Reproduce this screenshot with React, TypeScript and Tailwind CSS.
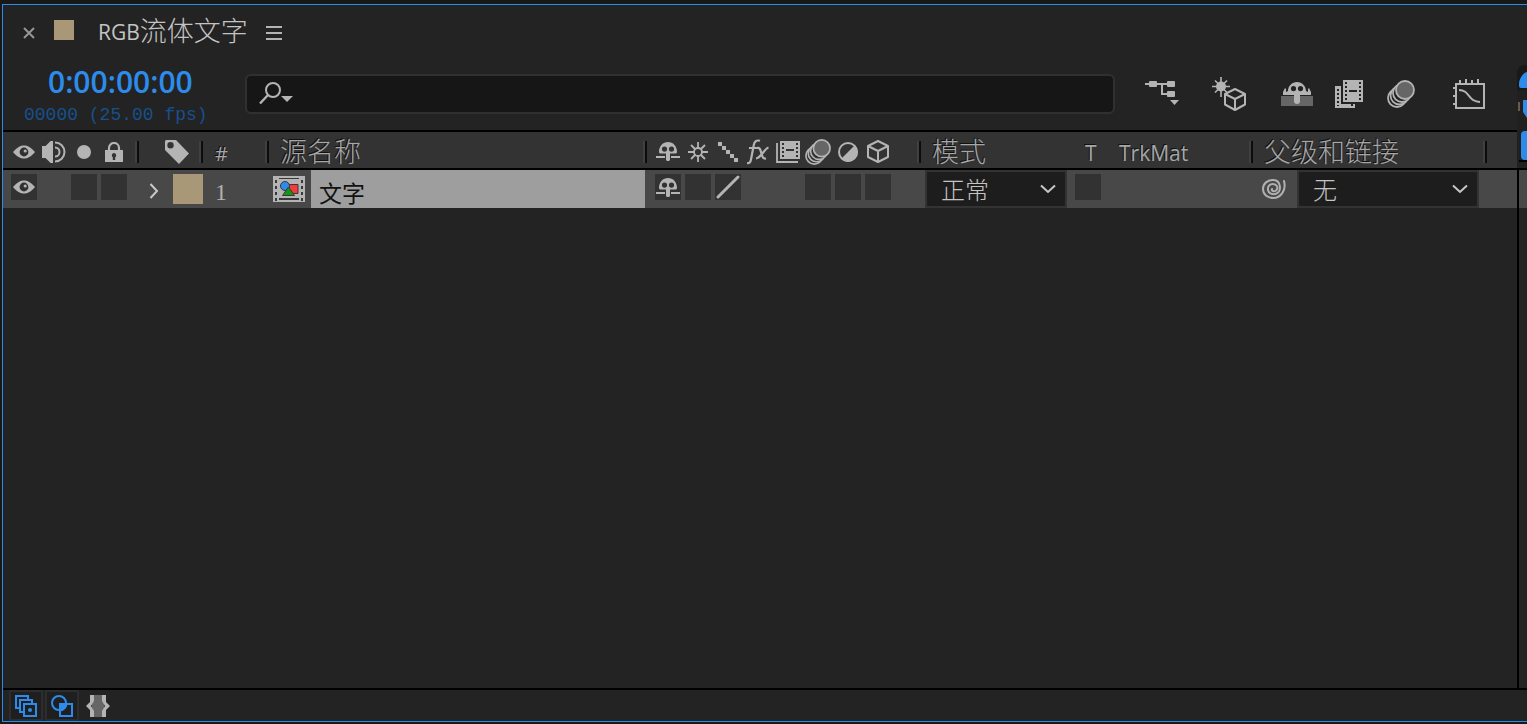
import { useState } from 'react';
import type { ReactNode } from 'react';
import clsx from 'clsx';

const COLUMNS =
  'grid grid-cols-[136px_64px_66px_minmax(200px,1fr)_274px_150px_182px_234px_30px]';

const HEADER_TEXT = 'whitespace-nowrap text-[#a6a6a6] [text-shadow:-1px_-1px_0_#111]';

function EyeIcon() {
  return (
    <svg width="22" height="14" viewBox="0 0 22 14">
      <path d="M0 7C4 2.300 7.500 .4 11 .4S18 2.300 22 7c-4 4.700-7.500 6.600-11 6.600S4 11.700 0 7z" fill="#b4b4b4" />
      <circle cx="11" cy="7" r="4.400" fill="#303030" />
      <circle cx="12.200" cy="6" r="1.600" fill="#b4b4b4" />
    </svg>
  );
}

function SpeakerIcon() {
  return (
    <svg width="24" height="22" viewBox="0 0 24 22" fill="none" stroke="#b4b4b4" strokeWidth="2">
      <path d="M0 6h4v10H0zM4 6l6-6v22l-6-6z" fill="#b4b4b4" />
      <path d="M13 6.500a4.500 4.500 0 0 1 0 9M13 1.500a9.500 9.500 0 0 1 0 19" />
    </svg>
  );
}

function LockIcon() {
  return (
    <svg width="18" height="20" viewBox="0 0 18 20">
      <path d="M4 9V6a5 5 0 0 1 10 0v3" fill="none" stroke="#b4b4b4" strokeWidth="2.200" />
      <path d="M0 8h18v12H0z" fill="#b4b4b4" />
      <path d="M9 11a2.300 2.300 0 0 0-1.200 4.200V18h2.400v-2.800A2.300 2.300 0 0 0 9 11z" fill="#333" />
    </svg>
  );
}

function TagIcon() {
  return (
    <svg width="24" height="24" viewBox="0 0 24 24">
      <path
        fillRule="evenodd"
        d="M1 0h10l13 13.500L14 24 0 10V1zM5.500 2a3.200 3.200 0 1 0 0 6.400 3.200 3.200 0 0 0 0-6.400z"
        fill="#b4b4b4"
      />
    </svg>
  );
}

function ShyIcon() {
  return (
    <svg width="24" height="19" viewBox="0 0 24 19" fill="#b4b4b4">
      <path
        fillRule="evenodd"
        d="M3 10C3 4 7 0 12 0s9 4 9 10c0 1-1 1.500-2 1.500h-5V18l-1 1h-2l-1-1v-6.500H5c-1 0-2-.5-2-1.500zM8.500 4.500a2.600 2.600 0 1 0 0 5.200 2.600 2.600 0 0 0 0-5.200zm7 0a2.600 2.600 0 1 0 0 5.200 2.600 2.600 0 0 0 0-5.200z"
      />
      <path d="M0 14h9v2H0zM15 14h9v2h-9z" />
    </svg>
  );
}

function SunIcon() {
  return (
    <svg width="20" height="20" viewBox="0 0 20 20" fill="none" stroke="#b4b4b4" strokeWidth="1.800">
      <circle cx="10" cy="10" r="4" />
      <path d="M10 0v6M10 14v6M0 10h6M14 10h6M3 3l4 4M13 13l4 4M17 3l-4 4M7 13l-4 4" />
    </svg>
  );
}

function QualityIcon() {
  return (
    <svg width="20" height="20" viewBox="0 0 20 20" fill="#b4b4b4">
      <path d="M0 0h4v4H0zM4 4h4v4H4zM8 8h4v4H8zM12 12h4v4h-4zM16 16h4v4h-4z" />
    </svg>
  );
}

function FxIcon() {
  return (
    <svg width="22" height="26" viewBox="0 0 22 26" fill="none" stroke="#b4b4b4" strokeWidth="2.200">
      <path d="M0 24c2 .6 3.500-.5 4-3.500L6.800 6C7.400 2.500 9.500 .8 13 1.800M2 9h9" />
      <path d="M10 9c3-.6 3.300 1.400 4.300 5s1.600 6 4.700 5.500M21.500 8.500c-4 1-7.500 10.500-12.500 11" />
    </svg>
  );
}

function FrameBlendIcon() {
  return (
    <svg width="24" height="22" viewBox="0 0 24 22">
      <path d="M1 2v19h21" fill="none" stroke="#b4b4b4" strokeWidth="1.800" />
      <path d="M4 0h20v18H4z" fill="#b4b4b4" />
      <path
        d="M6 2h2v2H6zM6 6h2v2H6zM6 10h2v2H6zM6 14h2v2H6zM20 2h2v2h-2zM20 6h2v2h-2zM20 10h2v2h-2zM20 14h2v2h-2zM10 8h8v2h-8z"
        fill="#333"
      />
    </svg>
  );
}

function MotionBlurIcon({ size, bg }: { size: number; bg: string }) {
  return (
    <svg width={size} height={size} viewBox="0 0 28 28" stroke="#b4b4b4" strokeWidth="1.800">
      <circle cx="10" cy="18" r="9" fill={bg} />
      <circle cx="12.500" cy="15.500" r="9" fill={bg} />
      <circle cx="15" cy="13" r="9" fill={bg} />
      <circle cx="18" cy="10" r="9" fill="#666" />
    </svg>
  );
}

function AdjustmentIcon() {
  return (
    <svg width="20" height="20" viewBox="0 0 20 20">
      <circle cx="10" cy="10" r="9" fill="none" stroke="#b4b4b4" strokeWidth="2" />
      <path d="M17 3A9.600 9.600 0 0 1 3 17z" fill="#b4b4b4" />
    </svg>
  );
}

function CubeIcon() {
  return (
    <svg width="22" height="23" viewBox="0 0 22 23" fill="none" stroke="#b4b4b4" strokeWidth="2" strokeLinejoin="round">
      <path d="M11 1l10 5v11l-10 5-10-5V6zM1 6l10 5 10-5M11 11v11" />
    </svg>
  );
}

function FlowchartIcon() {
  return (
    <svg width="35" height="25" viewBox="0 0 35 25" fill="#b4b4b4">
      <rect x="4" y="0" width="8" height="6" rx="1" />
      <rect x="22" y="0" width="8" height="6" rx="1" />
      <rect x="22" y="10" width="8" height="6" rx="1" />
      <path d="M0 2h23v2H0zM16 3h2v11h-2zM16 12h7v2h-7zM25 19h9l-4.500 5z" />
    </svg>
  );
}

function DraftIcon() {
  return (
    <svg width="35" height="34" viewBox="0 0 35 34" fill="none" stroke="#b4b4b4" strokeWidth="2" strokeLinejoin="round">
      <circle cx="9" cy="9.500" r="5" fill="#b4b4b4" stroke="none" />
      <path d="M9 0v20M0 9.500h18M3 3.500l12 12M15 3.500l-12 12" strokeWidth="1.600" />
      <path d="M23 12l10 5v10.500l-10 5.500-10-5.500V17z" fill="#232323" />
      <path d="M13 17l10 5 10-5M23 22v11" />
    </svg>
  );
}

function HideShyIcon() {
  return (
    <svg width="32" height="24" viewBox="0 0 32 24">
      <path d="M0 14h32v10H0z" fill="#666" />
      <path
        fillRule="evenodd"
        d="M7 9c0-5 4-9 9-9s9 4 9 9l2 1V7l1-1 2 4v3H2v-3l2-4 1 1v3zM12.500 4a2.600 2.600 0 1 0 0 5.200 2.600 2.600 0 0 0 0-5.200zm7 0a2.600 2.600 0 1 0 0 5.200 2.600 2.600 0 0 0 0-5.200z"
        fill="#b4b4b4"
      />
      <rect x="13" y="10" width="6" height="12" rx="3" fill="#b4b4b4" />
    </svg>
  );
}

function FilmStackIcon() {
  return (
    <svg width="28" height="28" viewBox="0 0 28 28">
      <path d="M0 6h6v18h14v4H0z" fill="#b4b4b4" />
      <path d="M2 9h2v2H2zM2 13h2v2H2zM2 17h2v2H2zM2 21h2v2H2zM2 25h2v1H2zM16 24h2v2h-2z" fill="#232323" />
      <path d="M7 0h21v23H7z" fill="#232323" />
      <path d="M8 0h20v22H8z" fill="#b4b4b4" />
      <path
        d="M10 2h2v2h-2zM10 6h2v2h-2zM10 10h2v2h-2zM10 14h2v2h-2zM10 18h2v2h-2zM24 2h2v2h-2zM24 6h2v2h-2zM24 10h2v2h-2zM24 14h2v2h-2zM24 18h2v2h-2zM14 10h8v2h-8z"
        fill="#232323"
      />
    </svg>
  );
}

function GraphIcon() {
  return (
    <svg width="32" height="30" viewBox="0 0 32 30" fill="none" stroke="#b4b4b4" strokeWidth="2">
      <path d="M3 5h28v24H3zM7 1v4M13 0v5M19 1v4M25 0v5M0 9h3M0 17h3M0 25h3" />
      <path d="M6 11c11 0 9 12 21 12" />
    </svg>
  );
}

function SearchIcon() {
  return (
    <svg width="34" height="23" viewBox="0 0 34 23">
      <circle cx="14" cy="8" r="7" fill="none" stroke="#b4b4b4" strokeWidth="2" />
      <path d="M9 13l-8 8.500" stroke="#b4b4b4" strokeWidth="2.400" />
      <path d="M22 14h12l-6 6z" fill="#b4b4b4" />
    </svg>
  );
}

function CompositionIcon() {
  return (
    <svg width="32" height="26" viewBox="0 0 32 26">
      <path d="M0 0h32v26H0z" fill="#b4b4b4" />
      <path
        d="M2 4h2v3H2zM2 10h2v3H2zM2 16h2v3H2zM2 22h2v3H2zM28 4h2v3h-2zM28 10h2v3h-2zM28 16h2v3h-2zM28 22h2v3h-2zM6 2h20v1H6zM6 22h20v2H6z"
        fill="#383838"
      />
      <path d="M15 8.500h10v9H15z" fill="#f23c3c" stroke="#383838" />
      <circle cx="12" cy="10" r="4.500" fill="#2d8ceb" stroke="#383838" />
      <path d="M15.500 11l6 8.500H9.500z" fill="#149614" stroke="#383838" />
    </svg>
  );
}

function PickWhipIcon() {
  return (
    <svg width="24" height="20" viewBox="0 0 24 20" fill="none" stroke="#b0b0b0" strokeWidth="2" strokeLinecap="round">
      <path d="M10 10c-1 2 2 3 4 1.500 3-3 .5-6.500-3-6.500-4 0-5.500 3-5 6 .5 3.500 4.500 5 8 3.800C20 12.500 19 1.200 11.500 1 5.500 .8 1 4.500 1 10c0 5.500 4.500 9 10 9 8 0 13.500-8 11-17" />
    </svg>
  );
}

function Chevron() {
  return (
    <svg className="pointer-events-none absolute right-[11px] top-[14px]" width="16" height="10" viewBox="0 0 16 10">
      <path d="M1 1.500l7 6.500 7-6.500" fill="none" stroke="#c8c8c8" strokeWidth="2" />
    </svg>
  );
}

function Slot({ children }: { children?: ReactNode }) {
  return <span className="flex w-[30px] shrink-0 items-center justify-center">{children}</span>;
}

function HeaderCell({ children, className, divider = true }: { children?: ReactNode; className?: string; divider?: boolean }) {
  return (
    <div className={clsx('flex min-w-0 items-center justify-between pt-[2px]', className)}>
      <div className="flex min-w-0 items-center">{children}</div>
      {divider && <span className="h-[22px] w-1 shrink-0 border-r-2 border-[#0c0c0c] bg-[#404040]" />}
    </div>
  );
}

function Toggle({ label, children, empty }: { label?: string; children?: ReactNode; empty?: boolean }) {
  const [on, setOn] = useState(true);
  if (empty) return <span className="w-[26px] shrink-0" />;
  return (
    <button
      aria-label={label}
      onClick={() => setOn(!on)}
      className="flex size-[26px] shrink-0 items-center justify-center bg-[#323232]"
    >
      {on && children}
    </button>
  );
}

function Dropdown({ label, options, className }: { label: string; options: string[]; className: string }) {
  return (
    <div className={clsx('relative', className)}>
      <select
        aria-label={label}
        className="h-[38px] w-full appearance-none border-2 border-[#333] bg-[#1d1d1d] px-[14px] pt-[2px] text-2xl leading-8 text-[#c4c4c4] outline-none"
      >
        {options.map((o) => (
          <option key={o}>{o}</option>
        ))}
      </select>
      <Chevron />
    </div>
  );
}

function Toolbar() {
  return (
    <div className="flex h-[73px] items-start pr-8">
      <div className="flex w-[242px] shrink-0 flex-col pl-[21px] pt-1">
        <button className="self-start pl-6 font-['Open_Sans',sans-serif] text-[30px] font-semibold leading-[42px] text-[#2d8ceb]">
          0:00:00:00
        </button>
        <span className="whitespace-nowrap font-['Liberation_Mono',monospace] text-lg leading-6 text-[#17508c]">
          00000 (25.00 fps)
        </span>
      </div>
      <label className="mt-[17px] flex h-10 min-w-0 flex-1 items-center rounded-md border-2 border-[#303030] bg-[#161616] px-3 pb-[2px]">
        <SearchIcon />
        <input aria-label="搜索" className="ml-2 min-w-0 flex-1 bg-transparent text-xl text-[#c4c4c4] outline-none" />
      </label>
      <div className="flex h-[73px] shrink-0 items-center pl-[30px]">
        <button aria-label="合成微型流程图"><FlowchartIcon /></button>
        <button aria-label="草图 3D" className="ml-8"><DraftIcon /></button>
        <button aria-label="隐藏消隐图层" className="ml-[34px]"><HideShyIcon /></button>
        <button aria-label="帧混合" className="ml-[22px]"><FilmStackIcon /></button>
        <button aria-label="运动模糊" className="ml-6"><MotionBlurIcon size={28} bg="#232323" /></button>
        <button aria-label="图表编辑器" className="ml-[38px]"><GraphIcon /></button>
      </div>
    </div>
  );
}

function ColumnHeader() {
  return (
    <div className={clsx(COLUMNS, 'h-10 border-y-2 border-black bg-[#333]')}>
      <HeaderCell className="pl-[6px]">
        <Slot><EyeIcon /></Slot>
        <Slot><SpeakerIcon /></Slot>
        <Slot><span className="size-[14px] rounded-full bg-[#b4b4b4]" /></Slot>
        <Slot><LockIcon /></Slot>
      </HeaderCell>
      <HeaderCell className="pl-[26px]"><TagIcon /></HeaderCell>
      <HeaderCell className="pl-3">
        <span className={clsx(HEADER_TEXT, 'pt-1 text-xl font-normal')}>#</span>
      </HeaderCell>
      <HeaderCell className="pl-[11px]">
        <span className={clsx(HEADER_TEXT, 'text-[27px] leading-8')}>源名称</span>
      </HeaderCell>
      <HeaderCell className="pl-[6px]">
        <Slot><ShyIcon /></Slot>
        <Slot><SunIcon /></Slot>
        <Slot><QualityIcon /></Slot>
        <Slot><FxIcon /></Slot>
        <Slot><FrameBlendIcon /></Slot>
        <Slot><MotionBlurIcon size={26} bg="#333" /></Slot>
        <Slot><AdjustmentIcon /></Slot>
        <Slot><CubeIcon /></Slot>
      </HeaderCell>
      <HeaderCell className="pl-[11px]" divider={false}>
        <span className={clsx(HEADER_TEXT, 'text-[27px] leading-8')}>模式</span>
      </HeaderCell>
      <HeaderCell className="pl-[14px]">
        <span className={clsx(HEADER_TEXT, 'w-[34px] pt-1 text-[21px] font-normal')}>T</span>
        <span className={clsx(HEADER_TEXT, 'pt-1 text-[21px] font-normal')}>TrkMat</span>
      </HeaderCell>
      <HeaderCell className="pl-[11px]">
        <span className={clsx(HEADER_TEXT, 'text-[27px] leading-8')}>父级和链接</span>
      </HeaderCell>
    </div>
  );
}

function LayerRow() {
  const [open, setOpen] = useState(false);
  return (
    <div className={clsx(COLUMNS, 'h-[38px] bg-[#484848]')}>
      <div className="flex gap-1 pl-2 pt-1">
        <Toggle label="视频"><EyeIcon /></Toggle>
        <Toggle empty />
        <Toggle label="独奏" />
        <Toggle label="锁定" />
      </div>
      <div className="flex items-start justify-between pl-[10px] pt-1">
        <button aria-label="展开图层" aria-expanded={open} onClick={() => setOpen(!open)} className="flex h-[34px] items-center">
          <svg width="10" height="16" viewBox="0 0 10 16" className={clsx(open && 'rotate-90')}>
            <path d="M1.500 1l6.500 7-6.500 7" fill="none" stroke="#c8c8c8" strokeWidth="2" />
          </svg>
        </button>
        <button aria-label="标签" className="size-[30px] bg-[#a99878]" />
      </div>
      <div className="flex items-center pl-3 pt-[6px] font-['Liberation_Serif',serif] text-2xl text-[#b0b0b0]">1</div>
      <div className="flex items-center pl-1">
        <CompositionIcon />
        <span className="mr-[2px] ml-[6px] flex h-[38px] flex-1 items-center bg-[#9e9e9e] pl-2 pt-2 text-[23px] font-normal text-[#111]">
          文字
        </span>
      </div>
      <div className="flex gap-1 pl-2 pt-1">
        <Toggle label="消隐"><ShyIcon /></Toggle>
        <Toggle label="塌陷" />
        <Toggle label="质量">
          <svg width="24" height="24" viewBox="0 0 24 24">
            <path d="M2 22L22 2" stroke="#b4b4b4" strokeWidth="3" strokeLinecap="round" />
          </svg>
        </Toggle>
        <Toggle empty />
        <Toggle empty />
        <Toggle label="运动模糊" />
        <Toggle label="调整图层" />
        <Toggle label="3D 图层" />
      </div>
      <Dropdown label="模式" options={['正常', '溶解', '变暗', '相乘']} className="ml-1 mr-1" />
      <div className="pl-1 pt-1">
        <Toggle label="保留基础透明度" />
      </div>
      <div className="flex items-center pr-2">
        <button aria-label="父级关联器" className="ml-[9px] mr-[11px] shrink-0"><PickWhipIcon /></button>
        <Dropdown label="父级和链接" options={['无']} className="flex-1" />
      </div>
    </div>
  );
}

/* Sliver of the time ruler that shows at the right edge of the layer list */
function TimeRuler() {
  return (
    <div className="flex w-[10px] shrink-0 flex-col overflow-hidden">
      <svg className="shrink-0" width="10" height="113" viewBox="0 0 10 113">
        <path d="M0 16q0-6 6-8h4v25H0z" fill="#191919" />
        <path d="M0 33h10v80H0z" fill="#202020" />
        <path d="M10 15C6 16 2 22 2 27v2q0 2 2 2h6z" fill="#2d8ceb" />
        <path d="M6 43h4v18l-4-6z" fill="#2d8ceb" />
        <path d="M2 45v9" stroke="#a99878" />
        <path d="M10 74H8q-4 0-4 4v21q0 4 4 4h2z" fill="#2d8ceb" />
        <path d="M2 103h8v2H2zM0 111h10v2H0z" fill="#000" />
      </svg>
      <div className="flex-1 border-l-2 border-black">
        <div className="h-[38px] bg-[#484848]" />
      </div>
    </div>
  );
}

function Footer() {
  return (
    <div className="flex h-[33px] shrink-0 items-stretch gap-[2px] border-t-2 border-black pl-[6px]">
      <button aria-label="展开图层开关" className="flex w-[34px] items-center justify-center border-2 border-[#2d2d2d] bg-[#1f1f1f]">
        <svg width="22" height="22" viewBox="0 0 22 22" fill="#1f1f1f" stroke="#2d8ceb" strokeWidth="2">
          <path d="M1 1h12v12H1z" />
          <path d="M5 5h12v12H5z" />
          <path d="M9 9h12v12H9z" />
          <circle cx="15" cy="15" r="2" fill="#2d8ceb" stroke="none" />
        </svg>
      </button>
      <button aria-label="展开转换控制" className="flex w-[34px] items-center justify-center border-2 border-[#2d2d2d] bg-[#1f1f1f]">
        <svg width="22" height="22" viewBox="0 0 22 22" fill="none" stroke="#2d8ceb" strokeWidth="2">
          <path d="M9 9h6.500a8 8 0 0 1-6.500 6.500z" fill="#2d8ceb" />
          <circle cx="8" cy="8" r="7" />
          <path d="M9 9h12v12H9z" />
        </svg>
      </button>
      <button aria-label="展开入点出点" className="flex w-[34px] items-center justify-center">
        <svg width="24" height="22" viewBox="0 0 24 22">
          <path d="M6 0h12v22H6z" fill="#666" />
          <path d="M4 0h4v6l-3 5 3 5v6H4v-7l-4-4 4-4zM20 0h-4v6l3 5-3 5v6h4v-7l4-4-4-4z" fill="#b4b4b4" />
        </svg>
      </button>
    </div>
  );
}

export default function App() {
  return (
    <div className="flex h-screen flex-col overflow-hidden bg-[#181818] pb-[2px] pl-[2px] pt-1 font-['Open_Sans','Noto_Sans_CJK_SC',sans-serif] font-light">
      <div className="flex min-h-0 flex-1 flex-col border-y border-l border-[#2d8ceb] bg-[#232323]">
        <div className="flex h-[52px] shrink-0 items-center pl-5 pt-1">
          <button aria-label="关闭">
            <svg width="12" height="12" viewBox="0 0 12 12">
              <path d="M1 1l10 10M11 1L1 11" stroke="#969696" strokeWidth="2" />
            </svg>
          </button>
          <span className="mb-[6px] ml-[19px] size-5 bg-[#a99878]" />
          <h1 className="ml-6 flex items-center whitespace-nowrap text-[#c4c4c4]">
            <span className="text-[21px] font-normal">RGB</span>
            <span className="pb-1 text-[27px] leading-8">流体文字</span>
          </h1>
          <button aria-label="面板菜单" className="ml-[18px]">
            <svg width="16" height="14" viewBox="0 0 16 14" fill="#b4b4b4">
              <path d="M0 0h16v2H0zM0 6h16v2H0zM0 12h16v2H0z" />
            </svg>
          </button>
        </div>
        <div className="flex min-h-0 flex-1">
          <div className="flex min-w-0 flex-1 flex-col">
            <Toolbar />
            <ColumnHeader />
            <LayerRow />
          </div>
          <TimeRuler />
        </div>
        <Footer />
      </div>
    </div>
  );
}
